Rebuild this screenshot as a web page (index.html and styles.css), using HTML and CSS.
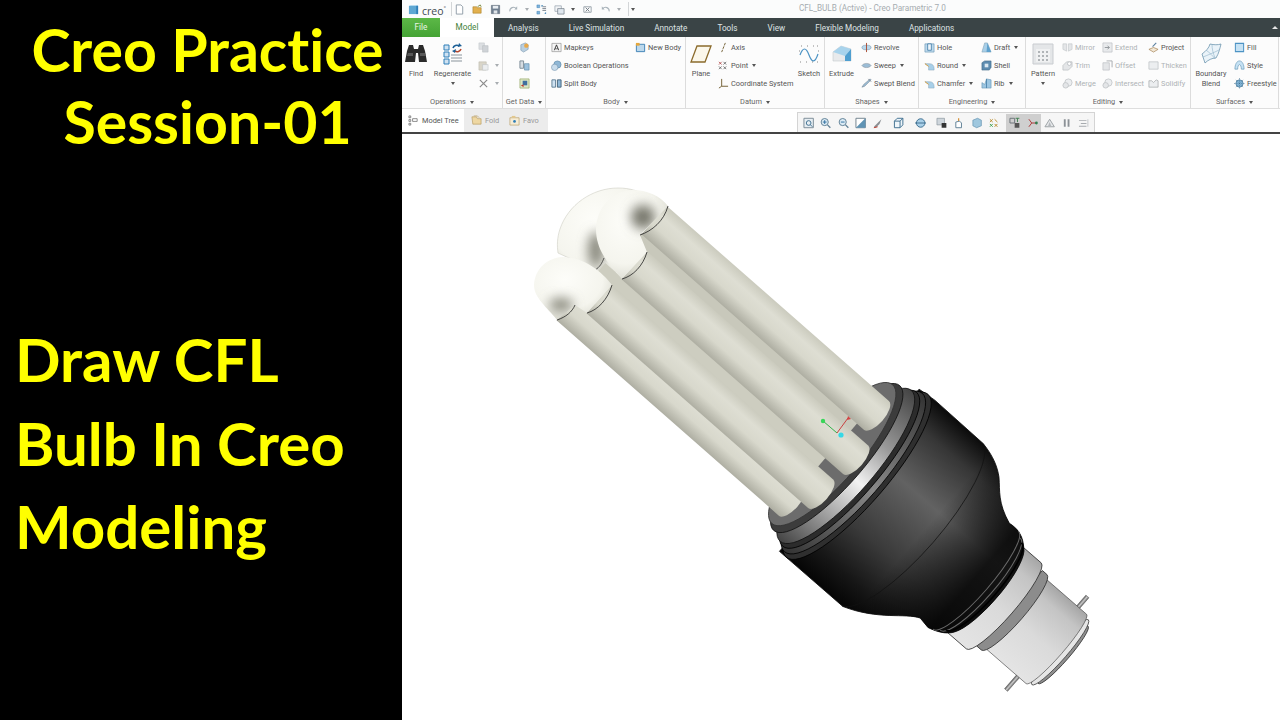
FILE: index.html
```html
<!DOCTYPE html>
<html lang="en">
<head>
    <meta charset="UTF-8">
    <title>Creo Practice Session-01</title>
    <link rel="stylesheet" href="styles.css">
</head>
<body>
    <!-- icon set -->
    <svg class="icon-defs" aria-hidden="true">
        <symbol id="i-doc" viewBox="0 0 12 12"><path d="M2.5 1h5l2 2v8h-7z" fill="#fff" stroke="#8d9aa5"/></symbol>
        <symbol id="i-open" viewBox="0 0 12 12"><path d="M1 3h4l1 1h4v6H1z" fill="#e2b04e" stroke="#a67a24" stroke-width=".6"/><path d="M6 3l3-2 1 2" fill="none" stroke="#7a8a3c"/></symbol>
        <symbol id="i-save" viewBox="0 0 12 12"><path d="M1.5 1.5h9v9h-9z" fill="#6f7f90" stroke="#56636f" stroke-width=".6"/><path d="M3 2h6v3H3z" fill="#e9eef2"/><path d="M4 7h4v3.4H4z" fill="#dfe4e8"/></symbol>
        <symbol id="i-redo" viewBox="0 0 12 12"><path d="M2 8a4 4 0 0 1 7-3" fill="none" stroke="#a9b3ba" stroke-width="1.2"/><path d="M10 2.5v3.5H7z" fill="#a9b3ba"/></symbol>
        <symbol id="i-undo" viewBox="0 0 12 12"><path d="M10 8a4 4 0 0 0-7-3" fill="none" stroke="#a9b3ba" stroke-width="1.2"/><path d="M2 2.5v3.5h3z" fill="#a9b3ba"/></symbol>
        <symbol id="i-regen-s" viewBox="0 0 12 12"><path d="M1 1h3v3H1zM1 8h3v3H1z" fill="#7fb4dc" stroke="#3a7fb4" stroke-width=".5"/><path d="M7 3h4M7 5h4M7 7h4" stroke="#76808a"/><path d="M6 1l2 1-2 1zM11 9l-2 1 2 1z" fill="#1f6fa8"/></symbol>
        <symbol id="i-windows" viewBox="0 0 12 12"><path d="M1 2h7v6H1z" fill="#f2f4f6" stroke="#8d9aa5" stroke-width=".7"/><path d="M4 5h7v6H4z" fill="#dfe7ee" stroke="#66717b" stroke-width=".7"/></symbol>
        <symbol id="i-close" viewBox="0 0 12 12"><path d="M2 3h8v6H2z" fill="none" stroke="#98a2aa"/><path d="M4 4l4 4M8 4l-4 4" stroke="#6d7780"/></symbol>
        <symbol id="i-binoc" viewBox="0 0 22 22"><path d="M2 8l2-6h4l1 4h4l1-4h4l2 6 2 11h-8l-1-9h-2l-1 9H0z" fill="#2b2b2b"/><path d="M3 10h5v3H2zM15 10h5l1 3h-6z" fill="#585858"/></symbol>
        <symbol id="i-regen" viewBox="0 0 22 22"><path d="M2 2h5v5H2zM2 9h5v5H2zM2 16h5v5H2z" fill="#cfe2f2" stroke="#2f7fb8"/><path d="M9 15h11M9 18h11M9 12h11" stroke="#8a949c" stroke-width="1.2"/><path d="M11 5a4 4 0 0 1 6-2" fill="none" stroke="#1c5f96" stroke-width="1.6"/><path d="M19 6a4 4 0 0 1-6 2" fill="none" stroke="#b4472e" stroke-width="1.6"/><path d="M17 0l3 3-4 1zM13 10l-3-2 4-2z" fill="#1c5f96"/></symbol>
        <symbol id="i-copy" viewBox="0 0 12 12"><path d="M1 1h6v7H1z" fill="#dcdfe2" stroke="#c2c7cb" stroke-width=".6"/><path d="M5 4h6v7H5z" fill="#cfd3d7" stroke="#b7bcc1" stroke-width=".6"/></symbol>
        <symbol id="i-paste" viewBox="0 0 12 12"><path d="M1 2h8v9H1z" fill="#d9d5c9" stroke="#bbb7aa" stroke-width=".6"/><path d="M5 5h6v6H5z" fill="#eceef0" stroke="#bcc1c5" stroke-width=".6"/></symbol>
        <symbol id="i-x" viewBox="0 0 12 12"><path d="M2 2l8 8M10 2l-8 8" stroke="#8b8b8b" stroke-width="1.3"/></symbol>
        <symbol id="i-data1" viewBox="0 0 12 12"><path d="M2 3l5-2 3 2v5l-5 3-3-2z" fill="#b9cfe0" stroke="#6f8fa8" stroke-width=".6"/><circle cx="8" cy="4" r="2.4" fill="#e8a94a"/></symbol>
        <symbol id="i-data2" viewBox="0 0 12 12"><path d="M1 1h4v8H1z" fill="#d6dde3" stroke="#7a8994"/><path d="M6 4h5v7H6z" fill="#9cc1de" stroke="#4f7f9f" stroke-width=".6"/></symbol>
        <symbol id="i-data3" viewBox="0 0 12 12"><path d="M1 1h10v10H1z" fill="#dbe6c5" stroke="#8ea15c" stroke-width=".7"/><path d="M4 3h5v5H4z" fill="#3f6f9f"/><path d="M2 8l3-1v3z" fill="#c0392b"/></symbol>
        <symbol id="i-mapkeys" viewBox="0 0 12 12"><path d="M1 1.5h10v9H1z" fill="#f4f4f4" stroke="#9a9a9a" stroke-width=".8"/><path d="M3 9l2.500-6h1L9 9H8L7.500 8h-3L4 9zM4.900 7h2.200L6 4.300z" fill="#444"/></symbol>
        <symbol id="i-bool" viewBox="0 0 12 12"><circle cx="7" cy="5" r="4" fill="#8fb7d6" stroke="#4f7f9f" stroke-width=".6"/><circle cx="4" cy="8" r="3.500" fill="#c8dcec" stroke="#6f8fa8" stroke-width=".6"/></symbol>
        <symbol id="i-split" viewBox="0 0 12 12"><path d="M1 2h4v8H1z" fill="#cfe2f2" stroke="#4d6f88" stroke-width=".9"/><path d="M7 2h4v8H7z" fill="#8fb7d6" stroke="#34566f" stroke-width=".9"/></symbol>
        <symbol id="i-newbody" viewBox="0 0 12 12"><path d="M1.500 2.500h9v8h-9z" fill="#bcd8ec" stroke="#3a7fb4"/><path d="M1 1h4v3H1z" fill="#e6a73c"/></symbol>
        <symbol id="i-plane" viewBox="0 0 22 22"><path d="M7 3h14l-6 16H1z" fill="#fbf7ea" stroke="#8b6b2c" stroke-width="1.300"/></symbol>
        <symbol id="i-axis" viewBox="0 0 12 12"><path d="M8 1L4 11" stroke="#6d5a2d" stroke-width="1" stroke-dasharray="3 1"/></symbol>
        <symbol id="i-point" viewBox="0 0 12 12"><path d="M1 7l3 3M4 7l-3 3M6 2l3 3M9 2l-3 3M6 7l3 3M9 7l-3 3" stroke="#555" stroke-width=".8"/><path d="M1 2l3 3M4 2l-3 3" stroke="#a33" stroke-width=".8"/></symbol>
        <symbol id="i-csys" viewBox="0 0 12 12"><path d="M4 1v8M4 9l-3 2M4 9h7" fill="none" stroke="#6d5a2d" stroke-width="1"/></symbol>
        <symbol id="i-sketch" viewBox="0 0 22 22"><path d="M2 12c3-8 6-8 9 0s6 8 9-1" fill="none" stroke="#4c93c4" stroke-width="1.200"/><path d="M3 3h1M9 3h1M15 3h1M19 3h1M2 19h1M8 19h1M14 19h1M19 19h1M1 8h1M20 8h1" stroke="#888" stroke-dasharray="1 1"/></symbol>
        <symbol id="i-extrude" viewBox="0 0 22 22"><path d="M2 9l8-6 10 3v12H2z" fill="#e8eaec" stroke="#c5cace" stroke-width=".6"/><path d="M10 3l10 3-6 7-12-4z" fill="#a8d3ec"/><path d="M14 13l6-7v12h-6z" fill="#4f9fd0"/></symbol>
        <symbol id="i-revolve" viewBox="0 0 12 12"><ellipse cx="6" cy="6" rx="5" ry="2.500" fill="#b9d8ec" stroke="#6f8fa8" stroke-width=".6"/><path d="M6 1v10" stroke="#a8482e" stroke-width="1"/></symbol>
        <symbol id="i-sweep" viewBox="0 0 12 12"><path d="M1 6c2-3 8-3 10 0-2 3-8 3-10 0z" fill="#9bbdd6" stroke="#84909a" stroke-width=".6"/></symbol>
        <symbol id="i-blend" viewBox="0 0 12 12"><path d="M1 10l3-1 7-7-1-1-7 6z" fill="#9bbdd6" stroke="#6f8090" stroke-width=".6"/><path d="M8 1l3 3" stroke="#7a8793"/></symbol>
        <symbol id="i-hole" viewBox="0 0 12 12"><path d="M1 2h10v9H1z" fill="#bcd8ec" stroke="#5d8cac" stroke-width=".6"/><path d="M4 2h4v7H4z" fill="#eef5fa" stroke="#2f6f9f" stroke-width=".8"/></symbol>
        <symbol id="i-round" viewBox="0 0 12 12"><path d="M1 4h5c3 0 5 2 5 5v2H5V7z" fill="#a8cfe8" stroke="#7f9fb4" stroke-width=".5"/><path d="M1 4l4 3" stroke="#e3a33a"/></symbol>
        <symbol id="i-draft" viewBox="0 0 12 12"><path d="M4 1h3l4 10H1z" fill="#a8cfe8" stroke="#7f9fb4" stroke-width=".6"/><path d="M7 1l4 10H6z" fill="#5fa1cd"/></symbol>
        <symbol id="i-shell" viewBox="0 0 12 12"><path d="M1 3l3-2h7v7l-2 3H1z" fill="#5d8cb0" stroke="#3f6684" stroke-width=".6"/><path d="M4 4h4v4H4z" fill="#dbe8f1"/></symbol>
        <symbol id="i-rib" viewBox="0 0 12 12"><path d="M1 11V5l3 2 2-6 5 1v9z" fill="#9cc6e2" stroke="#5f8fae" stroke-width=".6"/><path d="M6 1v10" stroke="#4f86ad"/></symbol>
        <symbol id="i-pattern" viewBox="0 0 22 22"><path d="M1 1h20v20H1z" fill="#e4e6e8" stroke="#c9ccd0"/><path d="M4 6h14v13H4z" fill="#f0f1f2"/><g fill="#9b9fa3"><circle cx="7" cy="9" r="1"/><circle cx="11" cy="9" r="1"/><circle cx="15" cy="9" r="1"/><circle cx="7" cy="13" r="1"/><circle cx="11" cy="13" r="1"/><circle cx="15" cy="13" r="1"/><circle cx="7" cy="17" r="1"/><circle cx="11" cy="17" r="1"/><circle cx="15" cy="17" r="1"/></g></symbol>
        <symbol id="i-mirror" viewBox="0 0 12 12"><path d="M1 2h4v8l-4-2zM11 2H7v8l4-2z" fill="#e4e6e8" stroke="#bcc0c4" stroke-width=".6"/></symbol>
        <symbol id="i-trim" viewBox="0 0 12 12"><path d="M1 6l4-4h6v5l-4 4H1z" fill="#e4e6e8" stroke="#b4b8bc" stroke-width=".7"/><circle cx="8" cy="4" r="2" fill="#fff" stroke="#bcc0c4"/></symbol>
        <symbol id="i-merge" viewBox="0 0 12 12"><circle cx="7" cy="5" r="4" fill="#eceef0" stroke="#b4b8bc" stroke-width=".7"/><circle cx="4" cy="8" r="3" fill="#e4e6e8" stroke="#b4b8bc" stroke-width=".7"/></symbol>
        <symbol id="i-extend" viewBox="0 0 12 12"><path d="M1 1h10v10H1z" fill="#e8eaec" stroke="#b8bcc0" stroke-width=".7"/><path d="M3 6h5M6 4l2 2-2 2" fill="none" stroke="#8f9498"/></symbol>
        <symbol id="i-offset" viewBox="0 0 12 12"><path d="M1 3h7v8H1z" fill="#e4e6e8" stroke="#b8bcc0" stroke-width=".7"/><path d="M5 1h6v7" fill="none" stroke="#a4a8ac"/></symbol>
        <symbol id="i-project" viewBox="0 0 12 12"><path d="M1 8l5-2 5 2-5 3z" fill="#f1e7d5" stroke="#a07a4a" stroke-width=".7"/><path d="M5 5l4-4" stroke="#5a7fa0" stroke-width="1.200"/></symbol>
        <symbol id="i-thicken" viewBox="0 0 12 12"><path d="M1 2h10v8H1z" fill="#eceef0" stroke="#bcc0c4" stroke-width=".8"/></symbol>
        <symbol id="i-solidify" viewBox="0 0 12 12"><path d="M1 3h3l2 2 3-3 2 1v7H1z" fill="#eceef0" stroke="#a4a8ac" stroke-width=".8"/></symbol>
        <symbol id="i-bblend" viewBox="0 0 22 22"><path d="M2 11C6 8 9 5 10 1c4 1 8 1 11 0-1 4-2 9-5 14-4 0-8 2-11 5-1-3-2-6-3-9z" fill="#eaf3f9" stroke="#6d95ae" stroke-width=".8"/><path d="M6 7c4 3 7 6 9 9M12 1c0 5 1 9 3 14M3 14c5-2 10-4 16-7" fill="none" stroke="#8fb2c7" stroke-width=".6"/></symbol>
        <symbol id="i-fill" viewBox="0 0 12 12"><path d="M1.500 1.500h9v9h-9z" fill="#c6e2f4" stroke="#4d93c4" stroke-width="1.100"/></symbol>
        <symbol id="i-style" viewBox="0 0 12 12"><path d="M1 10c0-5 2-9 5-9s5 4 5 9H8C8 7 7 5 6 5S4 7 4 10z" fill="#c6e2f4" stroke="#5f93b4" stroke-width=".7"/></symbol>
        <symbol id="i-freestyle" viewBox="0 0 12 12"><circle cx="6" cy="6" r="4" fill="#84b6d8" stroke="#41708f" stroke-width=".7"/><path d="M6 0v12M0 6h12M2 2l8 8M10 2l-8 8" stroke="#41708f" stroke-width=".6" stroke-dasharray="1.500 1"/></symbol>
        <symbol id="i-tree" viewBox="0 0 12 12"><path d="M1 1h2v2H1zM1 5h2v2H1zM1 9h2v2H1z" fill="none" stroke="#555" stroke-width=".7"/><path d="M5 4h5v3H5z" fill="none" stroke="#555" stroke-width=".7"/></symbol>
        <symbol id="i-folder" viewBox="0 0 12 12"><path d="M1 2h5l1 2h4v6H2z" fill="#eed7a2" stroke="#b59a5f" stroke-width=".7"/><path d="M3 1h4l2 2" fill="none" stroke="#b59a5f" stroke-width=".7"/></symbol>
        <symbol id="i-fav" viewBox="0 0 12 12"><path d="M1 3h10v8H1z" fill="#f6ecd5" stroke="#b59a5f" stroke-width=".7"/><path d="M3 1h4v2H3z" fill="#e3c88d"/><circle cx="6" cy="7" r="1.500" fill="#2f7fb8"/></symbol>
        <symbol id="t-refit" viewBox="0 0 12 12"><path d="M1 1h10v10H1z" fill="#e7eef3" stroke="#7a8a96"/><circle cx="6" cy="6" r="2.500" fill="none" stroke="#3f6f8f"/><path d="M8 8l2 2" stroke="#3f6f8f"/></symbol>
        <symbol id="t-zoomin" viewBox="0 0 12 12"><circle cx="5" cy="5" r="3.800" fill="#dcebf5" stroke="#5f7f95"/><path d="M3 5h4M5 3v4" stroke="#2f6f9f"/><path d="M8 8l3 3" stroke="#5f7f95" stroke-width="1.400"/></symbol>
        <symbol id="t-zoomout" viewBox="0 0 12 12"><circle cx="5" cy="5" r="3.800" fill="#dcebf5" stroke="#5f7f95"/><path d="M3 5h4" stroke="#2f6f9f"/><path d="M8 8l3 3" stroke="#5f7f95" stroke-width="1.400"/></symbol>
        <symbol id="t-repaint" viewBox="0 0 12 12"><path d="M1 1h10v10H1z" fill="#fff" stroke="#6f7f8b"/><path d="M1 11L11 1v10z" fill="#5f93b4"/></symbol>
        <symbol id="t-orient" viewBox="0 0 12 12"><path d="M2 10l5-5 3-3-2 5-4 4z" fill="#8a8f93"/><path d="M2 11l4-1" stroke="#c0392b"/></symbol>
        <symbol id="t-cube" viewBox="0 0 12 12"><path d="M1.500 4l3-3h6v7l-3 3h-6zM1.500 4h6v7M7.500 4l3-3" fill="#eef5fa" stroke="#3f6f8f"/></symbol>
        <symbol id="t-sect" viewBox="0 0 12 12"><circle cx="6" cy="6" r="4.500" fill="#a8cfe8" stroke="#3f6f8f"/><path d="M0 6h12" stroke="#3f6f8f"/></symbol>
        <symbol id="t-lock" viewBox="0 0 12 12"><path d="M1 1h8v7H1z" fill="#cfd6dc" stroke="#8a949c" stroke-width=".7"/><path d="M6 6h5v5H6z" fill="#333"/></symbol>
        <symbol id="t-persp" viewBox="0 0 12 12"><path d="M3 5l4-1 2 2v5H3z" fill="#fff" stroke="#5f7f95"/><path d="M6 1v3" stroke="#d48a2a" stroke-width="1.200"/></symbol>
        <symbol id="t-saved" viewBox="0 0 12 12"><path d="M2 3l5-2 4 2v6l-5 2-4-2z" fill="#9fc7de" stroke="#5f8fae" stroke-width=".7"/></symbol>
        <symbol id="t-datum" viewBox="0 0 12 12"><path d="M2 2l3 3M5 2L2 5M7 7l3 3M10 7l-3 3M7 2l3 3" stroke="#b98a2a"/><path d="M2 7l3 3M5 7l-3 3" stroke="#3f9f4f"/></symbol>
        <symbol id="t-notes" viewBox="0 0 12 12"><path d="M1 1h5v5H1z" fill="none" stroke="#6a7278"/><path d="M6 6h5v5H6z" fill="#555"/><path d="M7 1h4M9 1v4" stroke="#3f7f4f"/></symbol>
        <symbol id="t-spin" viewBox="0 0 12 12"><path d="M2 2l3 4-3 4M5 6h5" fill="none" stroke="#a33"/><circle cx="10" cy="6" r="1.500" fill="#2f7f4f"/></symbol>
        <symbol id="t-tri" viewBox="0 0 12 12"><path d="M6 2l5 8H1z" fill="#e5e7e9" stroke="#9a9fa3"/><path d="M6 5l2 5H4z" fill="#b4b8bc"/></symbol>
        <symbol id="t-pause" viewBox="0 0 12 12"><path d="M3 2h2v8H3zM7 2h2v8H7z" fill="#8c9196"/></symbol>
        <symbol id="t-last" viewBox="0 0 12 12"><path d="M1 3h8v1H1zM3 6h6v1H3zM1 9h8v1H1z" fill="#a7abaf"/><path d="M10 2h1v8h-1z" fill="#c4c7ca"/></symbol>
    </svg>

    <aside class="title-panel">
        <h1 class="session-title">Creo Practice<br>Session-01</h1>
        <h2 class="session-topic">Draw CFL<br>Bulb In Creo<br>Modeling</h2>
    </aside>

    <main class="app">
        <!-- quick access + title -->
        <div class="titlebar">
            <svg class="creo-cube" viewBox="0 0 12 12"><path d="M1 2h10v9H1z" fill="#5fa8d3"/><path d="M1 2l2-1h8v1z" fill="#a8d3ec"/><path d="M9 2h2v9H9z" fill="#2f7fb8"/></svg>
            <span class="creo-word">creo<sup>°</sup></span>
            <span class="qa-sep"></span>
            <svg class="qa"><use href="#i-doc"/></svg>
            <svg class="qa"><use href="#i-open"/></svg>
            <svg class="qa"><use href="#i-save"/></svg>
            <svg class="qa"><use href="#i-redo"/></svg>
            <span class="caret pale"></span>
            <svg class="qa"><use href="#i-regen-s"/></svg>
            <svg class="qa"><use href="#i-windows"/></svg>
            <span class="caret dark"></span>
            <svg class="qa"><use href="#i-close"/></svg>
            <svg class="qa"><use href="#i-undo"/></svg>
            <span class="caret pale"></span>
            <span class="qa-sep short"></span>
            <span class="caret dark"></span>
            <span class="window-title">CFL_BULB (Active) - Creo Parametric 7.0</span>
        </div>

        <nav class="tabs">
            <span class="tab-file">File</span>
            <span class="tab-active">Model</span>
            <span class="tab">Analysis</span>
            <span class="tab">Live Simulation</span>
            <span class="tab">Annotate</span>
            <span class="tab">Tools</span>
            <span class="tab">View</span>
            <span class="tab">Flexible Modeling</span>
            <span class="tab">Applications</span>
            <span class="tab-collapse"></span>
        </nav>

        <section class="ribbon">
            <div class="group g-ops">
                <div class="group-body">
                    <div class="big w-find"><div class="big-ico"><svg class="ico-lg"><use href="#i-binoc"/></svg></div><span>Find</span></div>
                    <div class="big w-regen"><div class="big-ico"><svg class="ico-lg"><use href="#i-regen"/></svg></div><span>Regenerate</span><span class="caret dark"></span></div>
                    <div class="col">
                        <div class="item"><svg class="ico"><use href="#i-copy"/></svg></div>
                        <div class="item"><svg class="ico"><use href="#i-paste"/></svg><span class="caret pale"></span></div>
                        <div class="item"><svg class="ico"><use href="#i-x"/></svg><span class="caret pale"></span></div>
                    </div>
                </div>
                <div class="group-label">Operations<span class="caret dark"></span></div>
            </div>

            <div class="group g-data">
                <div class="group-body">
                    <div class="col">
                        <div class="item"><svg class="ico"><use href="#i-data1"/></svg></div>
                        <div class="item"><svg class="ico"><use href="#i-data2"/></svg></div>
                        <div class="item"><svg class="ico"><use href="#i-data3"/></svg></div>
                    </div>
                </div>
                <div class="group-label">Get Data<span class="caret dark"></span></div>
            </div>

            <div class="group g-body">
                <div class="group-body">
                    <div class="col w-84">
                        <div class="item"><svg class="ico"><use href="#i-mapkeys"/></svg>Mapkeys</div>
                        <div class="item"><svg class="ico"><use href="#i-bool"/></svg>Boolean Operations</div>
                        <div class="item"><svg class="ico"><use href="#i-split"/></svg>Split Body</div>
                    </div>
                    <div class="col">
                        <div class="item"><svg class="ico"><use href="#i-newbody"/></svg>New Body</div>
                    </div>
                </div>
                <div class="group-label">Body<span class="caret dark"></span></div>
            </div>

            <div class="group g-datum">
                <div class="group-body">
                    <div class="big w-plane"><div class="big-ico"><svg class="ico-lg"><use href="#i-plane"/></svg></div><span>Plane</span></div>
                    <div class="col w-78">
                        <div class="item"><svg class="ico"><use href="#i-axis"/></svg>Axis</div>
                        <div class="item"><svg class="ico"><use href="#i-point"/></svg>Point<span class="caret dark"></span></div>
                        <div class="item"><svg class="ico"><use href="#i-csys"/></svg>Coordinate System</div>
                    </div>
                    <div class="big w-sketch"><div class="big-ico"><svg class="ico-lg"><use href="#i-sketch"/></svg></div><span>Sketch</span></div>
                </div>
                <div class="group-label">Datum<span class="caret dark"></span></div>
            </div>

            <div class="group g-shapes">
                <div class="group-body">
                    <div class="big w-extrude"><div class="big-ico"><svg class="ico-lg"><use href="#i-extrude"/></svg></div><span>Extrude</span></div>
                    <div class="col">
                        <div class="item"><svg class="ico"><use href="#i-revolve"/></svg>Revolve</div>
                        <div class="item"><svg class="ico"><use href="#i-sweep"/></svg>Sweep<span class="caret dark"></span></div>
                        <div class="item"><svg class="ico"><use href="#i-blend"/></svg>Swept Blend</div>
                    </div>
                </div>
                <div class="group-label">Shapes<span class="caret dark"></span></div>
            </div>

            <div class="group g-eng">
                <div class="group-body">
                    <div class="col w-57">
                        <div class="item"><svg class="ico"><use href="#i-hole"/></svg>Hole</div>
                        <div class="item"><svg class="ico"><use href="#i-round"/></svg>Round<span class="caret dark"></span></div>
                        <div class="item"><svg class="ico"><use href="#i-round"/></svg>Chamfer<span class="caret dark"></span></div>
                    </div>
                    <div class="col">
                        <div class="item"><svg class="ico"><use href="#i-draft"/></svg>Draft<span class="caret dark"></span></div>
                        <div class="item"><svg class="ico"><use href="#i-shell"/></svg>Shell</div>
                        <div class="item"><svg class="ico"><use href="#i-rib"/></svg>Rib<span class="caret dark"></span></div>
                    </div>
                </div>
                <div class="group-label">Engineering<span class="caret dark"></span></div>
            </div>

            <div class="group g-edit">
                <div class="group-body">
                    <div class="big w-pattern"><div class="big-ico"><svg class="ico-lg"><use href="#i-pattern"/></svg></div><span>Pattern</span><span class="caret dark"></span></div>
                    <div class="col w-40 off">
                        <div class="item"><svg class="ico"><use href="#i-mirror"/></svg>Mirror</div>
                        <div class="item"><svg class="ico"><use href="#i-trim"/></svg>Trim</div>
                        <div class="item"><svg class="ico"><use href="#i-merge"/></svg>Merge</div>
                    </div>
                    <div class="col w-46 off">
                        <div class="item"><svg class="ico"><use href="#i-extend"/></svg>Extend</div>
                        <div class="item"><svg class="ico"><use href="#i-offset"/></svg>Offset</div>
                        <div class="item"><svg class="ico"><use href="#i-merge"/></svg>Intersect</div>
                    </div>
                    <div class="col">
                        <div class="item"><svg class="ico"><use href="#i-project"/></svg>Project</div>
                        <div class="item off"><svg class="ico"><use href="#i-thicken"/></svg>Thicken</div>
                        <div class="item off"><svg class="ico"><use href="#i-solidify"/></svg>Solidify</div>
                    </div>
                </div>
                <div class="group-label">Editing<span class="caret dark"></span></div>
            </div>

            <div class="group g-surf">
                <div class="group-body">
                    <div class="big w-bblend"><div class="big-ico"><svg class="ico-lg"><use href="#i-bblend"/></svg></div><span>Boundary</span><span>Blend</span></div>
                    <div class="col">
                        <div class="item"><svg class="ico"><use href="#i-fill"/></svg>Fill</div>
                        <div class="item"><svg class="ico"><use href="#i-style"/></svg>Style</div>
                        <div class="item"><svg class="ico"><use href="#i-freestyle"/></svg>Freestyle</div>
                    </div>
                </div>
                <div class="group-label">Surfaces<span class="caret dark"></span></div>
            </div>
        </section>

        <div class="viewbar">
            <div class="tree-tabs">
                <span class="tree-tab current"><svg class="ico"><use href="#i-tree"/></svg>Model Tree</span>
                <span class="tree-tab w-folder"><svg class="ico"><use href="#i-folder"/></svg>Fold</span>
                <span class="tree-tab w-fav"><svg class="ico"><use href="#i-fav"/></svg>Favo</span>
            </div>
            <div class="graphics-bar">
                <svg class="tool"><use href="#t-refit"/></svg>
                <svg class="tool"><use href="#t-zoomin"/></svg>
                <svg class="tool"><use href="#t-zoomout"/></svg>
                <svg class="tool"><use href="#t-repaint"/></svg>
                <svg class="tool drop"><use href="#t-orient"/></svg>
                <svg class="tool drop"><use href="#t-cube"/></svg>
                <svg class="tool drop"><use href="#t-sect"/></svg>
                <svg class="tool"><use href="#t-lock"/></svg>
                <svg class="tool"><use href="#t-persp"/></svg>
                <svg class="tool"><use href="#t-saved"/></svg>
                <svg class="tool drop"><use href="#t-datum"/></svg>
                <svg class="tool on"><use href="#t-notes"/></svg>
                <svg class="tool on"><use href="#t-spin"/></svg>
                <svg class="tool"><use href="#t-tri"/></svg>
                <svg class="tool"><use href="#t-pause"/></svg>
                <svg class="tool"><use href="#t-last"/></svg>
            </div>
        </div>

        <!-- graphics window, viewBox is in page pixels -->
        <svg class="model" viewBox="402 134 878 586">
            <defs>
                <linearGradient id="tubeFill" x1="0" y1="0" x2="0" y2="1">
                    <stop offset="0" stop-color="#cbcbbe"/>
                    <stop offset=".3" stop-color="#deded3"/>
                    <stop offset=".62" stop-color="#d8d8cc"/>
                    <stop offset="1" stop-color="#aeaea2"/>
                </linearGradient>
                <linearGradient id="bodyFill" x1="0" y1="0" x2="0" y2="1">
                    <stop offset="0" stop-color="#0a0a0a"/>
                    <stop offset=".14" stop-color="#363636"/>
                    <stop offset=".38" stop-color="#626262"/>
                    <stop offset=".68" stop-color="#3a3a3a"/>
                    <stop offset=".88" stop-color="#161616"/>
                    <stop offset="1" stop-color="#050505"/>
                </linearGradient>
                <linearGradient id="neckShade" x1="110" y1="0" x2="180" y2="0" gradientUnits="userSpaceOnUse">
                    <stop offset="0" stop-color="#000" stop-opacity="0"/>
                    <stop offset="1" stop-color="#000" stop-opacity=".8"/>
                </linearGradient>
                <linearGradient id="ringBright" x1="0" y1="0" x2="0" y2="1">
                    <stop offset="0" stop-color="#444"/>
                    <stop offset=".3" stop-color="#999"/>
                    <stop offset=".52" stop-color="#f2f2f2"/>
                    <stop offset=".72" stop-color="#aaa"/>
                    <stop offset="1" stop-color="#444"/>
                </linearGradient>
                <linearGradient id="ringGrey" x1="0" y1="0" x2="0" y2="1">
                    <stop offset="0" stop-color="#333"/>
                    <stop offset=".5" stop-color="#8a8a8a"/>
                    <stop offset="1" stop-color="#333"/>
                </linearGradient>
                <linearGradient id="metalFill" x1="0" y1="0" x2="0" y2="1">
                    <stop offset="0" stop-color="#a6a6a6"/>
                    <stop offset=".18" stop-color="#c4c4c4"/>
                    <stop offset=".55" stop-color="#dadada"/>
                    <stop offset="1" stop-color="#e4e4e4"/>
                </linearGradient>
                <linearGradient id="pinFill" x1="0" y1="0" x2="1" y2="0">
                    <stop offset="0" stop-color="#555"/>
                    <stop offset=".5" stop-color="#ccc"/>
                    <stop offset="1" stop-color="#666"/>
                </linearGradient>
                <radialGradient id="bendFill" cx=".4" cy=".35" r=".8">
                    <stop offset="0" stop-color="#fdfdf9"/>
                    <stop offset=".6" stop-color="#f5f5ee"/>
                    <stop offset="1" stop-color="#cfcfc3"/>
                </radialGradient>
                <filter id="soft" x="-80%" y="-80%" width="260%" height="260%"><feGaussianBlur stdDeviation="6"/></filter>
                <clipPath id="clipFar"><path d="M558 253C557 246 557 238 560 229 568 205 592 188 618 188 630 188 640 191 650 198L612 280 595 270z"/></clipPath>
                <clipPath id="clipFront"><path d="M557 320C547 307 534 298 534 285 535 268 548 258 562 257 585 257 602 272 612 285L587 313 575 305z"/></clipPath>
                <clipPath id="clipBack"><path d="M622 279C606 262 596 248 596 229 597 206 613 191 632 190 648 190 660 196 668 206L640 235 647 252z"/></clipPath>
            </defs>

            <!-- lamp base and body, x runs along the axis -->
            <g transform="translate(839 460) rotate(41)">
                <rect x="275" y="-60" width="4" height="124" fill="url(#pinFill)" stroke="#555" stroke-width=".5"/>
                <ellipse cx="297" cy="0" rx="6" ry="38" fill="#8f8f8f" stroke="#333" stroke-width=".8"/>
                <ellipse cx="293" cy="0" rx="7" ry="43" fill="#e6e6e6" stroke="#444" stroke-width=".8"/>
                <path d="M236-46H288A7 46 0 0 1 288 46H236z" fill="url(#metalFill)" stroke="#444" stroke-width=".6"/>
                <path d="M226-50H232A10 50 0 0 1 232 50H226z" fill="#8c8c8c" stroke="#333" stroke-width=".8"/>
                <path d="M190-55H220A11 57 0 0 1 220 59H190z" fill="url(#metalFill)" stroke="#333" stroke-width=".8"/>
                <path d="M14-106 33-108 98-107C115-104 125-98 132-92 142-82 148-72 170-64 182-66 190-62 197-55A15 57 0 0 1 200 54C195 62 185 66 177 68L165 66C150 72 135 95 99 108L15 108z" fill="url(#bodyFill)" stroke="#111" stroke-width=".8"/>
                <path d="M14-106 33-108 98-107C115-104 125-98 132-92 142-82 148-72 170-64 182-66 190-62 197-55A15 57 0 0 1 200 54C195 62 185 66 177 68L165 66C150 72 135 95 99 108L15 108z" fill="url(#neckShade)"/>
                <path d="M98-107A30 108 0 0 1 98 108" fill="none" stroke="#111" stroke-width=".7"/>
                <path d="M182-64A14 64 0 0 1 182 66M188-60A14 60 0 0 1 188 62" fill="none" stroke="#6a6a6a" stroke-width="1"/>
                <path d="M192-57A14 57 0 0 1 192 58" fill="none" stroke="#000" stroke-width="1.600"/>

                <ellipse cx="24" cy="0" rx="29" ry="108" fill="#2f2f2f" stroke="#000" stroke-width=".8"/>
                <ellipse cx="19" cy="0" rx="29" ry="105" fill="url(#ringGrey)" stroke="#000" stroke-width=".8"/>
                <ellipse cx="14" cy="0" rx="28" ry="102" fill="#2c2c2c" stroke="#000" stroke-width=".8"/>
                <ellipse cx="9" cy="0" rx="28" ry="100" fill="url(#ringBright)" stroke="#111" stroke-width=".8"/>
                <ellipse cx="-3" cy="0" rx="27" ry="96" fill="#3c3c3c" stroke="#111" stroke-width=".8"/>
                <ellipse cx="-9" cy="0" rx="27" ry="92" fill="#6c6c6c" stroke="#333" stroke-width=".8"/>
            </g>

            <!-- far U bend and the legs showing between the others -->
            <path d="M558 253C557 246 557 238 560 229 568 205 592 188 618 188 630 188 640 191 650 198L612 280 595 270z" fill="url(#bendFill)" stroke="#cfcfc4" stroke-width=".6"/>
            <g clip-path="url(#clipFar)"><ellipse cx="596" cy="250" rx="8" ry="18" fill="#86867a" filter="url(#soft)"/></g>
            <path d="M595 270C600 267 602 263 604 258" fill="none" stroke="#222" stroke-width=".7"/>
            <line x1="601" y1="268" x2="822" y2="462" stroke="#cdcdc0" stroke-width="13"/>
            <line x1="638" y1="237" x2="854" y2="427" stroke="#c8c8bb" stroke-width="11"/>

            <!-- tubes, back to front -->
            <path transform="translate(654 220) rotate(41.3)" d="M0-19H296A8 19 0 0 1 296 19H0z" fill="url(#tubeFill)"/>
            <path transform="translate(634 265) rotate(41.3)" d="M0-19H295A8 19 0 0 1 295 19H0z" fill="url(#tubeFill)"/>
            <path d="M622 279C606 262 596 248 596 229 597 206 613 191 632 190 648 190 660 196 668 206L640 235 647 252z" fill="url(#bendFill)"/>
            <g clip-path="url(#clipBack)"><ellipse cx="643" cy="217" rx="12" ry="12" fill="#77776c" filter="url(#soft)"/></g>
            <path d="M640 235C652 231 664 221 668 206M622 279C633 276 643 266 647 252" fill="none" stroke="#222" stroke-width=".8"/>

            <path transform="translate(569 306) rotate(41.3)" d="M0-19H296A8 19 0 0 1 296 19H0z" fill="url(#tubeFill)"/>
            <path transform="translate(599 299) rotate(41.3)" d="M0-19H295A8 19 0 0 1 295 19H0z" fill="url(#tubeFill)"/>
            <path d="M557 320C547 307 534 298 534 285 535 268 548 258 562 257 585 257 602 272 612 285L587 313 575 305z" fill="url(#bendFill)"/>
            <g clip-path="url(#clipFront)"><ellipse cx="561" cy="305" rx="12" ry="7" fill="#8a8a7e" filter="url(#soft)"/></g>
            <path d="M557 320C566 317 572 312 575 305M587 313C598 310 608 299 612 285" fill="none" stroke="#222" stroke-width=".8"/>

            <!-- csys triad -->
            <path d="M823 421 837 433" stroke="#35b04a" stroke-width="1"/>
            <path d="M837 433 848 418" stroke="#c94040" stroke-width="1"/>
            <circle cx="823" cy="421" r="2.200" fill="#39d659"/>
            <path d="M848 416l3 3-4 1z" fill="#d24444"/>
            <circle cx="841" cy="435" r="2.600" fill="#35d8e6"/>
        </svg>
    </main>
</body>
</html>
```

FILE: styles.css
```css
* {
    box-sizing: border-box;
}
html, body {
    height: 100%;
}
body {
    margin: 0;
    display: flex;
    height: 720px;
    overflow: hidden;
    background-color: #fff;
    font-family: Roboto, sans-serif;
}
.icon-defs {
    position: absolute;
    width: 0;
    height: 0;
}

/* left title panel */
.title-panel {
    width: 402px;
    flex: none;
    background-color: #000;
    color: #ffff00;
    font-family: Lato, sans-serif;
    font-weight: 700;
    font-variant-ligatures: none;
}
.session-title {
    margin: 14px 0 0;
    font-size: 59px;
    font-weight: 700;
    line-height: 72px;
    text-align: center;
    padding-left: 13px;
}
.session-topic {
    margin: 160px 0 0;
    padding-left: 15px;
    font-size: 60px;
    font-weight: 700;
    line-height: 83.5px;
}

/* right app window */
.app {
    flex: 1;
    display: flex;
    flex-direction: column;
    min-width: 0;
}
.titlebar {
    position: relative;
    height: 18px;
    display: flex;
    align-items: center;
    padding-left: 6px;
    background-color: #fbfcfc;
}
.creo-cube {
    width: 11px;
    height: 11px;
}
.creo-word {
    margin-left: 3px;
    font-family: "Open Sans", sans-serif;
    font-size: 10.5px;
    line-height: 14px;
    color: #3f4a52;
    width: 26px;
}
.creo-word sup {
    font-size: 6px;
}
.qa-sep {
    width: 1px;
    height: 14px;
    margin: 0 2px 0 3px;
    background-color: #d3d6d8;
}
.qa-sep.short {
    margin: 0 3px 0 0;
}
.qa {
    width: 11px;
    height: 11px;
    margin-right: 7px;
}
.caret {
    display: inline-block;
    width: 0;
    height: 0;
    margin-left: 4px;
    border-left: 2px solid transparent;
    border-right: 2px solid transparent;
    border-top: 3px solid #555;
}
.caret.pale {
    border-top-color: #a8adb1;
}
.titlebar .caret {
    margin: 0 7px 0 -1px;
}
.window-title {
    position: absolute;
    left: 397px;
    top: 3px;
    font-size: 8.2px;
    line-height: 11px;
    color: #a6acb0;
    white-space: nowrap;
}

.tabs {
    height: 19px;
    display: flex;
    align-items: center;
    background-color: #3a4446;
    font-size: 8.2px;
    color: #dfe3e4;
}
.tab-file {
    width: 38px;
    height: 19px;
    line-height: 19px;
    text-align: center;
    color: #eaf6e4;
    background: linear-gradient(#5cb847, #44a334);
}
.tab-active {
    width: 54px;
    height: 19px;
    line-height: 19px;
    text-align: center;
    background-color: #fff;
    color: #3f7f3a;
}
.tab {
    padding: 0 15px;
    white-space: nowrap;
}
.tab:nth-child(3) {
    padding-left: 14px;
}
.tab-collapse {
    margin-left: auto;
    margin-right: 2px;
    width: 0;
    height: 0;
    border-left: 3px solid transparent;
    border-right: 3px solid transparent;
    border-bottom: 3px solid #e6e6e6;
}

/* ribbon */
.ribbon {
    height: 72px;
    display: flex;
    background-color: #fcfcfc;
    border-bottom: 1px solid #dedede;
    font-size: 7.4px;
    color: #555;
}
.group {
    display: flex;
    flex-direction: column;
    border-right: 1px solid #dcdcdc;
}
.group-body {
    height: 56px;
    display: flex;
    padding-top: 1px;
}
.group-label {
    height: 15px;
    line-height: 17px;
    text-align: center;
    color: #666;
    white-space: nowrap;
}
.g-ops { width: 101px; }
.g-data { width: 43px; }
.g-body { width: 140px; }
.g-datum { width: 139px; }
.g-shapes { width: 94px; }
.g-eng { width: 107px; }
.g-edit { width: 165px; }
.g-surf { width: 88px; }

.g-data .group-body { padding-left: 16px; }
.g-body .group-body { padding-left: 5px; }
.g-eng .group-body { padding-left: 5px; }

.col {
    display: flex;
    flex-direction: column;
    flex: none;
}
.item {
    height: 18px;
    display: flex;
    align-items: center;
    white-space: nowrap;
}
.off .item, .item.off {
    color: #aeb2b5;
}
.ico {
    width: 11px;
    height: 11px;
    margin-right: 2px;
    flex: none;
}
.ico-lg {
    width: 22px;
    height: 22px;
}
.big {
    display: flex;
    flex-direction: column;
    align-items: center;
    flex: none;
    line-height: 10px;
    white-space: nowrap;
}
.big-ico {
    height: 31px;
    display: flex;
    align-items: center;
}
.big .caret {
    margin: 3px 0 0;
}
.w-find { width: 28px; }
.w-regen { width: 45px; }
.g-ops .col { margin-left: 3px; }
.w-plane { width: 30px; }
.w-78 { width: 80px; margin-left: 2px; }
.w-sketch { width: 22px; }
.w-84 { width: 84px; }
.w-extrude { width: 33px; }
.g-shapes .col { margin-left: 3px; }
.w-57 { width: 57px; }
.w-pattern { width: 34px; }
.w-40 { width: 40px; margin-left: 2px; }
.w-46 { width: 46px; }
.w-bblend { width: 40px; }
.g-surf .col { margin-left: 3px; }

/* tree tabs and graphics toolbar */
.viewbar {
    height: 25px;
    display: flex;
    background-color: #fff;
    border-bottom: 2px solid #444;
    font-size: 7.4px;
    color: #555;
}
.tree-tabs {
    width: 395px;
    display: flex;
    flex: none;
}
.tree-tab {
    display: flex;
    align-items: center;
    height: 23px;
    padding-left: 6px;
    width: 62px;
    background-color: #fff;
}
.tree-tab .ico {
    margin-right: 3px;
}
.w-folder, .w-fav {
    background-color: #ececec;
    color: #999;
    padding-left: 7px;
}
.w-folder { width: 38px; }
.w-fav { width: 46px; }
.graphics-bar {
    width: 298px;
    height: 20px;
    margin-top: 3px;
    display: flex;
    align-items: center;
    padding: 0 2px;
    border: 1px solid #d4d4d4;
    border-bottom: 0;
    background-color: #f6f6f6;
}
.tool {
    width: 17.3px;
    height: 18px;
    padding: 3px;
    flex: none;
}
.tool.drop {
    margin-right: 4px;
}
.tool.on {
    background-color: #cfcfcf;
}
.model {
    display: block;
    flex: 1;
    width: 878px;
    height: 586px;
    background-color: #fff;
}
```
